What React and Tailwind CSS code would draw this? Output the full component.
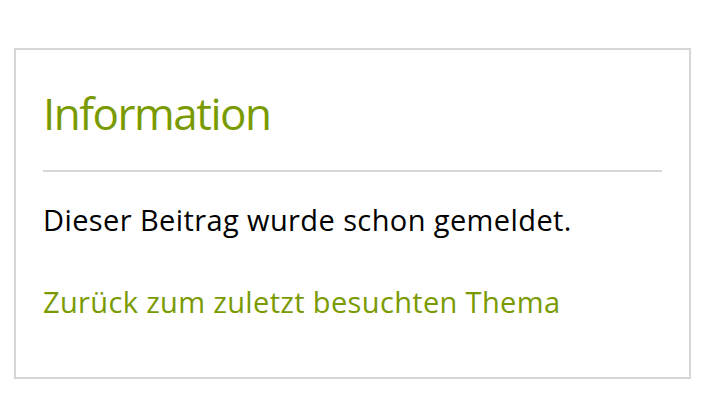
export default function App() {
  return (
    <div className="w-[711px] h-[405px] bg-white pt-[48px] pl-[14px]" style={{ fontFamily: '"Open Sans", sans-serif' }}>
      <div className="w-[677px] h-[331px] border-2 border-[#d6d6d6] px-[27px] pt-[36px]">
        <h1 className="text-[44px] leading-[54px] font-normal text-[#7a9a01] tracking-[-1.5px]">Information</h1>
        <div className="mt-[30px] h-[2px] bg-[#d6d6d6]" />
        <p className="mt-[29px] text-[29px] leading-[38px] text-black tracking-[0.4px]">Dieser Beitrag wurde schon gemeldet.</p>
        <a href="#" className="block mt-[44px] text-[29px] leading-[38px] text-[#7a9a01] tracking-[0.35px]">Zurück zum zuletzt besuchten Thema</a>
      </div>
    </div>
  );
}
